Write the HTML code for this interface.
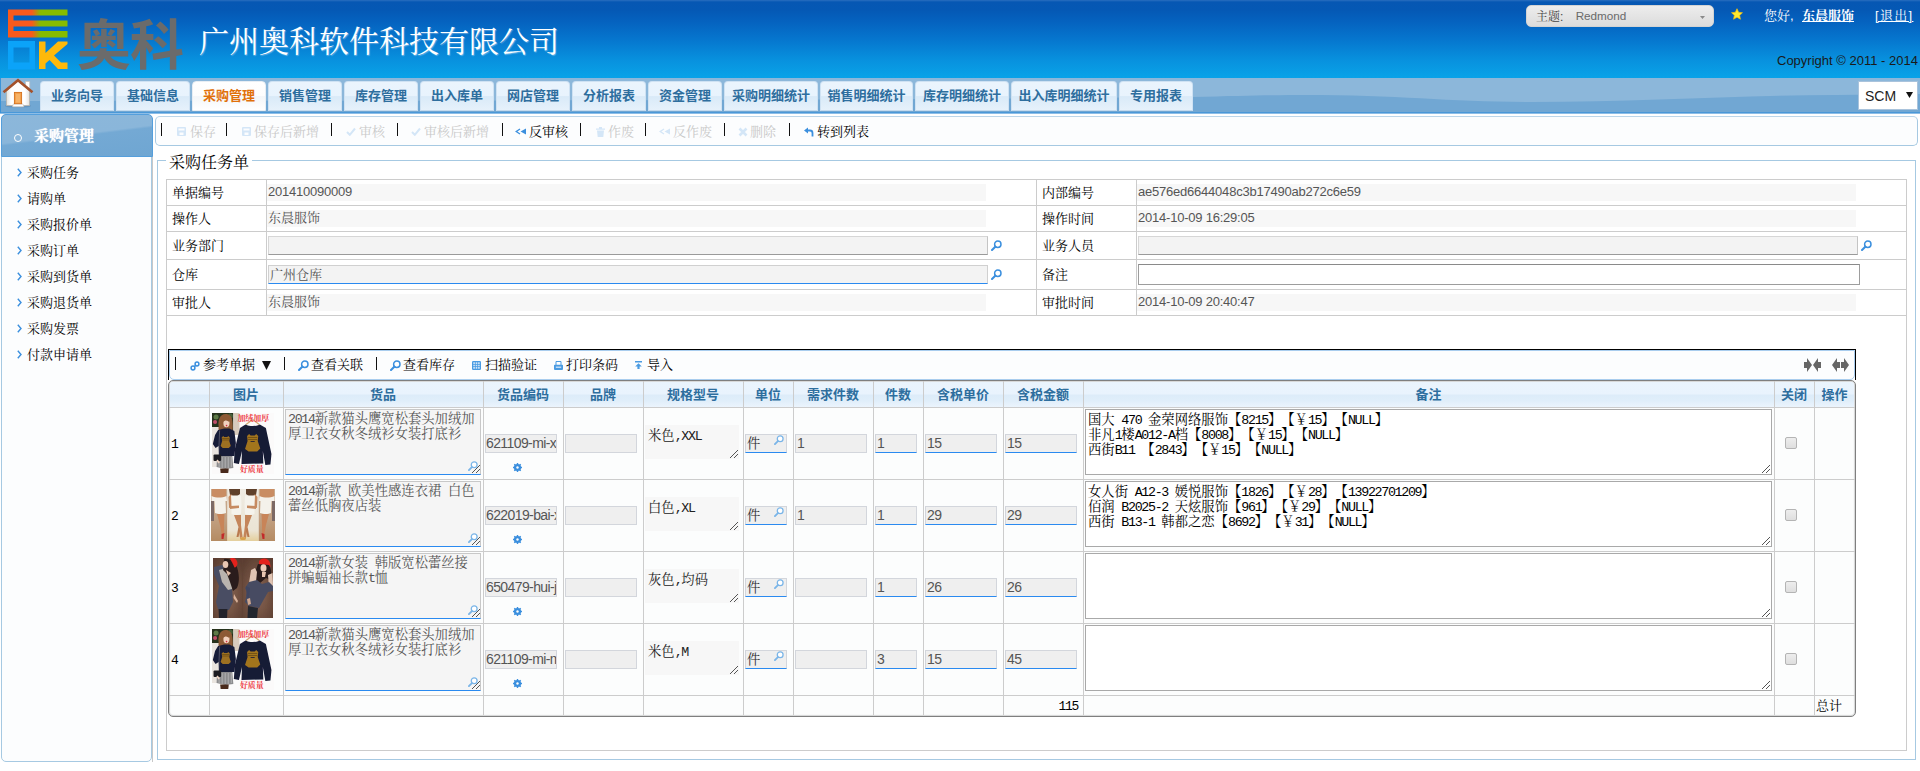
<!DOCTYPE html>
<html lang="zh-CN"><head><meta charset="utf-8"><title>采购任务单</title>
<style>
*{box-sizing:border-box;margin:0;padding:0}
html,body{width:1920px;height:771px;overflow:hidden;background:#fff;text-spacing-trim:space-all;font-kerning:none}
body{position:relative;font:13px/15px "Liberation Sans","Noto Serif CJK SC",serif;color:#000}
.a{position:absolute}
.song{font-family:"Liberation Serif","Noto Serif CJK SC",serif}
.sans{font-family:"Liberation Sans","Noto Sans CJK SC",sans-serif}
#hdr{left:0;top:0;width:1920px;height:79px;background:linear-gradient(#2a6ebf 0,#0657b3 2px,#0558b4 12%,#0562bf 27%,#0676ce 50%,#0891de 76%,#09a1e7 96%,#0aa2e8 100%)}
#nav{left:0;top:78px;width:1920px;height:35px;background:#8cb7da;overflow:hidden}
.tab{top:81px;height:30px;border:1px solid #cfe2f3;border-bottom-color:#c3daee;border-radius:4px 4px 0 0;background:linear-gradient(#eaf4fd 0,#e8f3fd 50%,#d9eaf8 52%,#e6f1fb 100%);color:#2e6e9e;font:bold 13px/27px "Liberation Sans","Noto Sans CJK SC",sans-serif;text-align:center;white-space:nowrap}
.tab.on{background:linear-gradient(#fff 0,#fdfdfd 50%,#f3f6f9 52%,#fff 100%);color:#e17009;border-color:#e8eef4}
.tb{white-space:nowrap;font:13px/15px "Liberation Sans","Noto Serif CJK SC",serif}
.dis{color:#c9c9c9}
.sep{width:1px;height:13px;background:#111}
.side{left:18px;color:#111;white-space:nowrap}
.lbl{color:#000;white-space:nowrap}
.val{color:#555;white-space:nowrap;font:12px/15px "Liberation Sans","Noto Serif CJK SC",sans-serif}
.rob{background:#f7f7f7;height:17px}
.hl{height:1px;background:#ccc}
.vl{width:1px;background:#ccc}
.gh{top:382px;height:26px;color:#2e6e9e;font:bold 13px/26px "Liberation Sans","Noto Sans CJK SC",sans-serif;text-align:center;white-space:nowrap}
.inp{background:#efefef;border:1px solid #d3d6dc;height:19px;color:#555;font:14px/17px "Liberation Sans",sans-serif;letter-spacing:-.6px;padding-left:1px;overflow:hidden;white-space:nowrap}
.inp.b{border-bottom:1px solid #2a8af0}
.ta{background:#f5f5f5;border:1px solid #c8c8c8;border-bottom:1px solid #2a8af0;color:#555;font:13.330px/15px "Liberation Mono","Noto Serif CJK SC",serif;padding:2px 2px;overflow:hidden;word-spacing:-1.330px}
.tw{background:#fff;border:1px solid #a9a9a9;color:#000;font:13.330px/15px "Liberation Mono","Noto Serif CJK SC",serif;padding:3px 2px 1px;overflow:hidden;white-space:pre;word-spacing:-1.330px}
.m{font-family:'Liberation Mono',monospace;letter-spacing:-.1em}
.cb{width:12px;height:12px;border:1px solid #b4b4b4;border-radius:2px;background:linear-gradient(#ededed,#dedede)}
</style></head>
<body>
<div class="a" id="hdr"></div>
<svg class="a" style="left:7px;top:8px" width="62" height="62" viewBox="0 0 62 62">
<defs><linearGradient id="lg" x1="0" x2="1" y1="0" y2="0"><stop offset="0.40" stop-color="#f95a1c"/><stop offset="0.55" stop-color="#86bc00"/></linearGradient></defs>
<path d="M1 1.5H60.5V7.5H6.5V12.5H60.5V18.5H6.5V23H60.5V29.5H1Z" fill="url(#lg)"/>
<path d="M1 33H28V61.5H1Z M6.5 39.5V54.5H22.5V39.5Z" fill="#0ba3f9" fill-rule="evenodd"/>
<path d="M32 33.5H38.5V45L51 33.5H60.5V36L47 47.5L54 54.5H60.5V61H51L42.5 52L38.5 55.5V61H32Z" fill="#fdb90b"/>
</svg>
<div class="a sans" style="left:77px;top:13px;font:bold 54px/66px 'Liberation Sans','Noto Sans CJK SC',sans-serif;color:#6b6b6b;letter-spacing:-1px;white-space:nowrap">奥科</div>
<div class="a song" style="left:199px;top:22px;font:30px/40px 'Liberation Serif','Noto Serif CJK SC',serif;color:#fff;white-space:nowrap;text-shadow:1px 1px 1px rgba(255,255,255,.35)">广州奥科软件科技有限公司</div>
<div class="a " style="left:1526px;top:5px;width:188px;height:22px;border-radius:5px;background:linear-gradient(#ededed,#dcdcdc);border:1px solid #d3d3d3"></div>
<div class="a tb" style="left:1536px;top:9px;color:#444;font-size:12px">主题: <span style="margin-left:9px;font-size:11.700px;color:#6a6a6a;position:relative;top:-1.500px">Redmond</span></div>
<svg class="a" style="left:1700px;top:16px" width="5" height="3"><path d="M0 0H5L2.500 3Z" fill="#8a8a8a"/></svg>
<svg class="a" style="left:1731px;top:8px" width="12" height="12" viewBox="0 0 14 14"><path d="M7 .8L8.9 5l4.5.5-3.3 3.1.9 4.5L7 10.8 3 13.100l.9-4.500L.6 5.500 5.100 5z" fill="#ffe92e" stroke="#f3bd0f" stroke-width=".8"/></svg>
<div class="a tb" style="left:1764px;top:8px;color:#fff">您好,</div>
<div class="a tb" style="left:1802px;top:8px;color:#fff;font-weight:bold;text-decoration:underline">东晨服饰</div>
<div class="a tb" style="left:1875px;top:8px;color:#fff;text-decoration:underline;letter-spacing:1.300px">[退出]</div>
<div class="a " style="left:1777px;top:53px;color:#1a1a1a;font:13px/15px 'Liberation Sans','Noto Sans CJK SC',sans-serif;white-space:nowrap">Copyright © 2011 - 2014</div>
<div class="a" id="nav"><svg class="a" style="left:0;top:0" width="1920" height="35" viewBox="0 0 1920 35" preserveAspectRatio="none"><path d="M0 23 C400 23 900 22 1192 19 C1250 17.500 1280 17 1304 17 C1400 17 1450 24 1532 24 C1640 24 1740 17 1836 17 L1920 16 V35 H0Z" fill="#71a7d3"/></svg></div>
<div class="a " style="left:0;top:112px;width:1920px;height:1px;background:#4a98d8"></div>
<div class="a " style="left:0;top:113px;width:1920px;height:1px;background:#8dbde6"></div>
<div class="a " style="left:0;top:78px;width:1px;height:35px;background:#3a93d8"></div>
<div class="a tab" style="left:40px;width:74px">业务向导</div>
<div class="a tab" style="left:116px;width:74px">基础信息</div>
<div class="a tab on" style="left:192px;width:74px">采购管理</div>
<div class="a tab" style="left:268px;width:74px">销售管理</div>
<div class="a tab" style="left:344px;width:74px">库存管理</div>
<div class="a tab" style="left:420px;width:74px">出入库单</div>
<div class="a tab" style="left:496px;width:74px">网店管理</div>
<div class="a tab" style="left:572px;width:74px">分析报表</div>
<div class="a tab" style="left:648px;width:74px">资金管理</div>
<div class="a tab" style="left:724px;width:94px">采购明细统计</div>
<div class="a tab" style="left:820px;width:93px">销售明细统计</div>
<div class="a tab" style="left:915px;width:94px">库存明细统计</div>
<div class="a tab" style="left:1011px;width:106px">出入库明细统计</div>
<div class="a tab" style="left:1119px;width:74px">专用报表</div>
<svg class="a" style="left:2px;top:78px" width="32" height="32" viewBox="0 0 32 32">
<defs><linearGradient id="wg" x1="0" x2="1" y1="0" y2="0"><stop offset="0" stop-color="#e4e2de"/><stop offset=".2" stop-color="#fff"/><stop offset=".8" stop-color="#fff"/><stop offset="1" stop-color="#e4e2de"/></linearGradient></defs>
<ellipse cx="16" cy="28" rx="13" ry="1.600" fill="rgba(60,90,130,.25)"/>
<path d="M23.500 3.500h4.200v9l-4.200-4z" fill="#fff" stroke="#c4c0b8" stroke-width=".7"/>
<path d="M4.500 13V27.500H27.500V13L16 3Z" fill="url(#wg)" stroke="#b9b4ab" stroke-width=".8"/>
<path d="M1.500 14.200L16 2.200L30.500 14.200" fill="none" stroke="#a4522c" stroke-width="2.600" stroke-linejoin="miter"/>
<path d="M11.300 26h9.700l.8 2.800H10.500z" fill="#fff" stroke="#c4c0b8" stroke-width=".6"/>
<rect x="12.400" y="14.400" width="7.200" height="11.300" fill="#f3a04a" stroke="#d46f1a" stroke-width=".9"/>
<rect x="14" y="16" width="4" height="8.500" fill="#f7b266"/>
</svg>
<div class="a " style="left:1858px;top:81px;width:60px;height:29px;background:#fff;border:1px solid #a9c3dc"></div>
<div class="a " style="left:1865px;top:88px;font:14px/16px 'Liberation Sans','Noto Sans CJK SC',sans-serif;color:#222">SCM</div>
<svg class="a" style="left:1906px;top:92px" width="7" height="6"><path d="M0 0H7L3.500 6Z" fill="#111"/></svg>
<div class="a " style="left:1px;top:114px;width:151px;height:648px;border:1px solid #a6c9e2;border-radius:5px;background:#fcfdfe"></div>
<div class="a " style="left:152px;top:118px;width:1px;height:644px;background:#c8c8c8"></div>
<div class="a " style="left:1px;top:114px;width:152px;height:43px;border-radius:5px 5px 0 0;background:linear-gradient(173deg,#8cb7da 0,#8ab6da 48%,#74a9d4 52%,#6fa6d2 100%);border:1px solid #559fdc"></div>
<div class="a " style="left:14px;top:134px;width:8px;height:8px;border:1px solid #fff;border-radius:50%"></div>
<div class="a " style="left:34px;top:126px;color:#fff;font:bold 15px/20px 'Liberation Sans','Noto Serif CJK SC',serif;white-space:nowrap;text-shadow:0 0 1px #fff">采购管理</div>
<svg class="a" style="left:17px;top:168px" width="5" height="9"><path d="M.8 .8L4 4.500L.8 8.200" fill="none" stroke="#3b8fde" stroke-width="1.4"/></svg>
<div class="a tb" style="left:27px;top:165px">采购任务</div>
<svg class="a" style="left:17px;top:194px" width="5" height="9"><path d="M.8 .8L4 4.500L.8 8.200" fill="none" stroke="#3b8fde" stroke-width="1.4"/></svg>
<div class="a tb" style="left:27px;top:191px">请购单</div>
<svg class="a" style="left:17px;top:220px" width="5" height="9"><path d="M.8 .8L4 4.500L.8 8.200" fill="none" stroke="#3b8fde" stroke-width="1.4"/></svg>
<div class="a tb" style="left:27px;top:217px">采购报价单</div>
<svg class="a" style="left:17px;top:246px" width="5" height="9"><path d="M.8 .8L4 4.500L.8 8.200" fill="none" stroke="#3b8fde" stroke-width="1.4"/></svg>
<div class="a tb" style="left:27px;top:243px">采购订单</div>
<svg class="a" style="left:17px;top:272px" width="5" height="9"><path d="M.8 .8L4 4.500L.8 8.200" fill="none" stroke="#3b8fde" stroke-width="1.4"/></svg>
<div class="a tb" style="left:27px;top:269px">采购到货单</div>
<svg class="a" style="left:17px;top:298px" width="5" height="9"><path d="M.8 .8L4 4.500L.8 8.200" fill="none" stroke="#3b8fde" stroke-width="1.4"/></svg>
<div class="a tb" style="left:27px;top:295px">采购退货单</div>
<svg class="a" style="left:17px;top:324px" width="5" height="9"><path d="M.8 .8L4 4.500L.8 8.200" fill="none" stroke="#3b8fde" stroke-width="1.4"/></svg>
<div class="a tb" style="left:27px;top:321px">采购发票</div>
<svg class="a" style="left:17px;top:350px" width="5" height="9"><path d="M.8 .8L4 4.500L.8 8.200" fill="none" stroke="#3b8fde" stroke-width="1.4"/></svg>
<div class="a tb" style="left:27px;top:347px">付款申请单</div>
<div class="a " style="left:155px;top:116px;width:1763px;height:30px;border:1px solid #a6c9e2;border-radius:5px;background:#fcfdfe;border-top-color:#bcd6ea"></div>
<div class="a sep" style="left:161px;top:123px"></div>
<svg class="a" style="left:177px;top:127px" width="9" height="9" viewBox="0 0 9 9"><path d="M1 0h7a1 1 0 0 1 1 1v7a1 1 0 0 1-1 1H1a1 1 0 0 1-1-1V1a1 1 0 0 1 1-1zM1.500 1.500v2h6v-2zM2.500 5.500v2.500h4V5.500z" fill="#d4e6f7" fill-rule="evenodd"/></svg>
<div class="a tb dis" style="left:190px;top:124px">保存</div>
<div class="a sep" style="left:226px;top:123px"></div>
<svg class="a" style="left:242px;top:127px" width="9" height="9" viewBox="0 0 9 9"><path d="M1 0h7a1 1 0 0 1 1 1v7a1 1 0 0 1-1 1H1a1 1 0 0 1-1-1V1a1 1 0 0 1 1-1zM1.500 1.500v2h6v-2zM2.500 5.500v2.500h4V5.500z" fill="#d4e6f7" fill-rule="evenodd"/></svg>
<div class="a tb dis" style="left:254px;top:124px">保存后新增</div>
<div class="a sep" style="left:331px;top:123px"></div>
<svg class="a" style="left:346px;top:127px" width="10" height="9" viewBox="0 0 10 9"><path d="M1 5L3.800 7.800L9 1.500" fill="none" stroke="#d4e6f7" stroke-width="2"/></svg>
<div class="a tb dis" style="left:359px;top:124px">审核</div>
<div class="a sep" style="left:397px;top:123px"></div>
<svg class="a" style="left:411px;top:127px" width="10" height="9" viewBox="0 0 10 9"><path d="M1 5L3.800 7.800L9 1.500" fill="none" stroke="#d4e6f7" stroke-width="2"/></svg>
<div class="a tb dis" style="left:424px;top:124px">审核后新增</div>
<div class="a sep" style="left:502px;top:123px"></div>
<svg class="a" style="left:515px;top:127px" width="11" height="9" viewBox="0 0 11 9"><path d="M5 2L1.200 4.500L5 7" fill="none" stroke="#3b8fde" stroke-width="1.300"/><path d="M11 1.500V7.500L5.500 4.500Z" fill="#3b8fde"/></svg>
<div class="a tb" style="left:529px;top:124px">反审核</div>
<div class="a sep" style="left:580px;top:123px"></div>
<svg class="a" style="left:596px;top:127px" width="9" height="10" viewBox="0 0 9 10"><path d="M0 1.500h9v1.200H0zM3 0h3v1.500H3zM1 3.500h7l-.7 6.500H1.700z" fill="#d4e6f7"/></svg>
<div class="a tb dis" style="left:608px;top:124px">作废</div>
<div class="a sep" style="left:645px;top:123px"></div>
<svg class="a" style="left:659px;top:127px" width="11" height="9" viewBox="0 0 11 9"><path d="M5 2L1.200 4.500L5 7" fill="none" stroke="#d4e6f7" stroke-width="1.300"/><path d="M11 1.500V7.500L5.500 4.500Z" fill="#d4e6f7"/></svg>
<div class="a tb dis" style="left:673px;top:124px">反作废</div>
<div class="a sep" style="left:724px;top:123px"></div>
<svg class="a" style="left:738px;top:127px" width="10" height="10" viewBox="0 0 10 10"><path d="M1.500 1.500L8.500 8.500M8.500 1.500L1.500 8.500" fill="none" stroke="#d4e6f7" stroke-width="2.600"/></svg>
<div class="a tb dis" style="left:750px;top:124px">删除</div>
<div class="a sep" style="left:789px;top:123px"></div>
<svg class="a" style="left:804px;top:127px" width="10" height="10" viewBox="0 0 10 10"><path d="M4 0.500V6.500L0 3.500Z" fill="#3b8fde"/><path d="M3.500 3.500H6A2.500 2.500 0 0 1 8.500 6V9.500" fill="none" stroke="#3b8fde" stroke-width="1.800"/></svg>
<div class="a tb" style="left:817px;top:124px">转到列表</div>
<div class="a " style="left:157px;top:160px;width:1759px;height:600px;border:1px solid #a6c9e2"></div>
<div class="a " style="left:166px;top:152px;width:86px;height:18px;background:#fff"></div>
<div class="a " style="left:169px;top:153px;font:16px/20px 'Liberation Serif','Noto Serif CJK SC',serif;color:#000;white-space:nowrap">采购任务单</div>
<div class="a " style="left:166px;top:179px;width:1741px;height:572px;border:1px solid #ccc"></div>
<div class="a hl" style="left:167px;top:205px;width:1739px"></div>
<div class="a hl" style="left:167px;top:231px;width:1739px"></div>
<div class="a hl" style="left:167px;top:259px;width:1739px"></div>
<div class="a hl" style="left:167px;top:289px;width:1739px"></div>
<div class="a hl" style="left:167px;top:315px;width:1739px"></div>
<div class="a vl" style="left:266px;top:180px;height:135px"></div>
<div class="a vl" style="left:1036px;top:180px;height:135px"></div>
<div class="a vl" style="left:1136px;top:180px;height:135px"></div>
<div class="a tb lbl" style="left:172px;top:185px">单据编号</div>
<div class="a tb lbl" style="left:1042px;top:185px">内部编号</div>
<div class="a tb lbl" style="left:172px;top:211px">操作人</div>
<div class="a tb lbl" style="left:1042px;top:211px">操作时间</div>
<div class="a tb lbl" style="left:172px;top:238px">业务部门</div>
<div class="a tb lbl" style="left:1042px;top:238px">业务人员</div>
<div class="a tb lbl" style="left:172px;top:267px">仓库</div>
<div class="a tb lbl" style="left:1042px;top:267px">备注</div>
<div class="a tb lbl" style="left:172px;top:295px">审批人</div>
<div class="a tb lbl" style="left:1042px;top:295px">审批时间</div>
<div class="a rob" style="left:267px;top:184px;width:719px"></div>
<div class="a rob" style="left:1137px;top:184px;width:719px"></div>
<div class="a rob" style="left:267px;top:210px;width:719px"></div>
<div class="a rob" style="left:1137px;top:210px;width:719px"></div>
<div class="a rob" style="left:267px;top:294px;width:719px"></div>
<div class="a rob" style="left:1137px;top:294px;width:719px"></div>
<div class="a val" style="left:268px;top:184px;font-size:13px;letter-spacing:-.22px">201410090009</div>
<div class="a val" style="left:1138px;top:184px;font-size:13px;letter-spacing:-.22px">ae576ed6644048c3b17490ab272c6e59</div>
<div class="a val" style="left:268px;top:210px;font-size:13px">东晨服饰</div>
<div class="a val" style="left:1138px;top:210px;font-size:13px;letter-spacing:-.22px">2014-10-09 16:29:05</div>
<div class="a val" style="left:268px;top:294px;font-size:13px">东晨服饰</div>
<div class="a val" style="left:1138px;top:294px;font-size:13px;letter-spacing:-.22px">2014-10-09 20:40:47</div>
<div class="a " style="left:268px;top:236px;width:720px;height:19px;background:#f3f3f3;border:1px solid #d6d6d6;border-bottom-color:#9a9a9a;border-right-color:#c4c4c4"></div>
<div class="a " style="left:1138px;top:236px;width:720px;height:19px;background:#f3f3f3;border:1px solid #d6d6d6;border-bottom-color:#9a9a9a;border-right-color:#c4c4c4"></div>
<div class="a " style="left:268px;top:265px;width:720px;height:19px;background:#f3f3f3;border:1px solid #d0d0d0;border-bottom:1px solid #2a8af0"></div>
<div class="a val" style="left:270px;top:267px;font-size:13px">广州仓库</div>
<div class="a " style="left:1138px;top:264px;width:722px;height:21px;background:#fff;border:1px solid #9d9d9d;border-top-color:#8a8a8a"></div>
<svg class="a" style="left:991px;top:240px" width="11" height="11" viewBox="0 0 11 11"><circle cx="6.800" cy="4.200" r="3.200" fill="#fff" stroke="#3b8fde" stroke-width="1.500"/><path d="M4.300 6.700L1 10" stroke="#3b8fde" stroke-width="2" stroke-linecap="round"/></svg>
<svg class="a" style="left:991px;top:269px" width="11" height="11" viewBox="0 0 11 11"><circle cx="6.800" cy="4.200" r="3.200" fill="#fff" stroke="#3b8fde" stroke-width="1.500"/><path d="M4.300 6.700L1 10" stroke="#3b8fde" stroke-width="2" stroke-linecap="round"/></svg>
<svg class="a" style="left:1861px;top:240px" width="11" height="11" viewBox="0 0 11 11"><circle cx="6.800" cy="4.200" r="3.200" fill="#fff" stroke="#3b8fde" stroke-width="1.500"/><path d="M4.300 6.700L1 10" stroke="#3b8fde" stroke-width="2" stroke-linecap="round"/></svg>
<div class="a " style="left:168px;top:349px;width:1688px;height:31px;border:1px solid #000;border-bottom:0"></div>
<div class="a " style="left:169px;top:350px;width:1686px;height:30px;border:1px solid #a9cdee;border-radius:0 0 5px 5px;background:#fcfdfe"></div>
<div class="a sep" style="left:175px;top:357px"></div>
<svg class="a" style="left:190px;top:361px" width="10" height="10" viewBox="0 0 10 10"><circle cx="7" cy="3" r="1.900" fill="none" stroke="#3b8fde" stroke-width="1.500"/><circle cx="3" cy="7" r="1.900" fill="none" stroke="#3b8fde" stroke-width="1.500"/><path d="M4.300 5.700L5.700 4.300" stroke="#3b8fde" stroke-width="1.500"/></svg>
<div class="a tb" style="left:203px;top:357px">参考单据</div>
<svg class="a" style="left:262px;top:361px" width="9" height="9"><path d="M0 0H9L4.500 9Z" fill="#111"/></svg>
<div class="a sep" style="left:284px;top:357px"></div>
<svg class="a" style="left:298px;top:360px" width="11" height="11" viewBox="0 0 11 11"><circle cx="6.800" cy="4.200" r="3.200" fill="#fff" stroke="#3b8fde" stroke-width="1.500"/><path d="M4.300 6.700L1 10" stroke="#3b8fde" stroke-width="2" stroke-linecap="round"/></svg>
<div class="a tb" style="left:311px;top:357px">查看关联</div>
<div class="a sep" style="left:376px;top:357px"></div>
<svg class="a" style="left:390px;top:360px" width="11" height="11" viewBox="0 0 11 11"><circle cx="6.800" cy="4.200" r="3.200" fill="#fff" stroke="#3b8fde" stroke-width="1.500"/><path d="M4.300 6.700L1 10" stroke="#3b8fde" stroke-width="2" stroke-linecap="round"/></svg>
<div class="a tb" style="left:403px;top:357px">查看库存</div>
<svg class="a" style="left:472px;top:361px" width="9" height="9" viewBox="0 0 9 9"><rect width="9" height="9" rx="1.200" fill="#4a9be2"/><path d="M1.300 1.300h1.600v1.600H1.300zM3.700 1.300h1.600v1.600H3.700zM6.100 1.300h1.600v1.600H6.100zM1.300 3.700h1.600v1.600H1.300zM3.700 3.700h1.600v1.600H3.700zM6.100 3.700h1.600v1.600H6.100zM1.300 6.100h1.600v1.600H1.300zM3.700 6.100h1.600v1.600H3.700zM6.100 6.100h1.600v1.600H6.100z" fill="#cfe5f8"/></svg>
<div class="a tb" style="left:485px;top:357px">扫描验证</div>
<svg class="a" style="left:554px;top:361px" width="9" height="9" viewBox="0 0 9 9"><path d="M2 .5h5v4H2z" fill="#fff" stroke="#4a9be2" stroke-width="1"/><path d="M.8 3.800h7.400a.8 .8 0 0 1 .8 .8v3.400a1 1 0 0 1-1 1H1a1 1 0 0 1-1-1V4.600a.8 .8 0 0 1 .8-.8z" fill="#4a9be2"/><rect x="1.800" y="5.600" width="5.400" height="1.200" fill="#dcecfa"/></svg>
<div class="a tb" style="left:566px;top:357px">打印条码</div>
<svg class="a" style="left:635px;top:361px" width="7" height="8" viewBox="0 0 7 8"><path d="M0 0h7v1.400H0zM3.500 2.200L6.800 5.400H4.600V8H2.400V5.400H.2z" fill="#4a9be2"/></svg>
<div class="a tb" style="left:647px;top:357px">导入</div>
<svg class="a" style="left:1804px;top:358px" width="17" height="14" viewBox="0 0 17 14"><path d="M0 4h3V0l5 7-5 7v-4H0z" fill="#666"/><path d="M17 4h-3V0L9 7l5 7v-4h3z" fill="#666"/></svg>
<svg class="a" style="left:1832px;top:358px" width="17" height="14" viewBox="0 0 17 14"><path d="M8 4H5V0L0 7l5 7v-4h3z" fill="#666"/><path d="M9 4h3V0l5 7-5 7v-4H9z" fill="#666"/></svg>
<div class="a " style="left:168px;top:380px;width:1688px;height:337px;border:1px solid #7f7f7f;border-radius:5px;background:#fcfdfd;box-shadow:inset 0 0 1px 1px rgba(0,0,0,.16)"></div>
<div class="a " style="left:170px;top:382px;width:1684px;height:25px;border-radius:3px 3px 0 0;background:linear-gradient(#eaf4fd 0,#e9f3fd 48%,#ddecf9 52%,#e0eefa 75%,#ebf4fd 100%)"></div>
<div class="a gh" style="left:209px;width:74px">图片</div>
<div class="a gh" style="left:283px;width:200px">货品</div>
<div class="a gh" style="left:483px;width:80px">货品编码</div>
<div class="a gh" style="left:563px;width:80px">品牌</div>
<div class="a gh" style="left:643px;width:100px">规格型号</div>
<div class="a gh" style="left:743px;width:50px">单位</div>
<div class="a gh" style="left:793px;width:80px">需求件数</div>
<div class="a gh" style="left:873px;width:50px">件数</div>
<div class="a gh" style="left:923px;width:80px">含税单价</div>
<div class="a gh" style="left:1003px;width:80px">含税金额</div>
<div class="a gh" style="left:1083px;width:691px">备注</div>
<div class="a gh" style="left:1774px;width:40px">关闭</div>
<div class="a gh" style="left:1814px;width:41px">操作</div>
<div class="a vl" style="left:209px;top:381px;height:334px"></div>
<div class="a vl" style="left:283px;top:381px;height:334px"></div>
<div class="a vl" style="left:483px;top:381px;height:334px"></div>
<div class="a vl" style="left:563px;top:381px;height:334px"></div>
<div class="a vl" style="left:643px;top:381px;height:334px"></div>
<div class="a vl" style="left:743px;top:381px;height:334px"></div>
<div class="a vl" style="left:793px;top:381px;height:334px"></div>
<div class="a vl" style="left:873px;top:381px;height:334px"></div>
<div class="a vl" style="left:923px;top:381px;height:334px"></div>
<div class="a vl" style="left:1003px;top:381px;height:334px"></div>
<div class="a vl" style="left:1083px;top:381px;height:334px"></div>
<div class="a vl" style="left:1774px;top:381px;height:334px"></div>
<div class="a vl" style="left:1814px;top:381px;height:334px"></div>
<div class="a hl" style="left:169px;top:407px;width:1686px"></div>
<div class="a hl" style="left:169px;top:479px;width:1686px"></div>
<div class="a hl" style="left:169px;top:551px;width:1686px"></div>
<div class="a hl" style="left:169px;top:623px;width:1686px"></div>
<div class="a hl" style="left:169px;top:695px;width:1686px"></div>
<div class="a tb" style="left:171px;top:436px"><span class="m">1</span></div>
<svg class="a" style="left:212px;top:413px" width="62" height="61" viewBox="0 0 61 61" preserveAspectRatio="none">
<defs><filter id="b1" x="-5%" y="-5%" width="110%" height="110%"><feGaussianBlur stdDeviation=".45"/></filter></defs>
<rect width="61" height="61" fill="#fbfafa"/>
<g filter="url(#b1)">
<rect x="0" y="0" width="21" height="20" fill="#27301f"/>
<rect x="0" y="14" width="9" height="40" fill="#e9e4df"/>
<circle cx="3" cy="9" r="2" fill="#c0506a"/><circle cx="4" cy="4" r="2.500" fill="#5d7a46"/><circle cx="18" cy="3" r="2.500" fill="#46603a"/>
<rect x="21" y="0" width="6" height="22" fill="#d8cbbd"/>
<path d="M13.500 1C7 1 6 8 6.500 13C6 17 7 20 9 21L12 16L17 17L19 20C21 17 20.500 12 20 8C19.500 3 17 1 13.500 1Z" fill="#8d5a34"/>
<ellipse cx="14.200" cy="10" rx="3" ry="4.300" fill="#f1d0bd"/>
<path d="M10.500 6.500C12 4.500 16 4.500 17.500 7L17 9C15 7 12.500 7 11 9Z" fill="#8d5a34"/>
<circle cx="14.300" cy="12.600" r=".8" fill="#d8283c"/>
<path d="M6 17L12 15.500H17L22 18L23.500 30L22 43H7L6.500 33L3.500 35L.8 31L3 22Z" fill="#171b38"/>
<path d="M9.500 24.500L11 23L12 24H15L16 23L17.500 24.500L17 28L18.500 33L16.500 35H10.500L8.500 33L10 28Z" fill="#9c6f20"/>
<path d="M10 25.500h7M10 27h7" stroke="#6a4a16" stroke-width=".7"/>
<path d="M7.500 17.500L6.500 43" stroke="#8a8a92" stroke-width=".5" fill="none"/>
<path d="M5 43H20L21 55L13 56L4.500 54Z" fill="#8c8c8e"/>
<path d="M7 44v10M10 44v11M13 44v11M16 44v11M19 44v10" stroke="#b9b9bb" stroke-width=".8"/>
<rect x="1.500" y="41.500" width="7.500" height="6.500" rx="1" fill="#1d1d20"/>
<path d="M5 47l2 3" stroke="#f0d6c6" stroke-width="1.600"/>
<path d="M8 55.500L16.500 55.500L16 60H8.500Z" fill="#4a2c1e"/>
<path d="M40 6.500L33.500 11.500M40 6.500L46.500 11.500" stroke="#cfa870" stroke-width="1.200" fill="none"/>
<path d="M40 5v2" stroke="#b9b9b9" stroke-width=".8"/>
<path d="M33 11.500C37 13.500 43 13.500 47 11.500L53 15L58.500 41L57.500 51.500L52.500 52L50 38L50.500 50.500L29 51L29.500 38L26.500 51L21.500 50L22.500 36L27.500 15Z" fill="#161a36"/>
<path d="M34.500 23L36.500 21L38 22.500H42L43.500 21L45.500 23L45 28L47.500 35.500L44.500 38.500H36L32.500 36L35 28Z" fill="#a2741f"/>
<path d="M35.500 24.500h9M35.500 26.500h9" stroke="#6a4a16" stroke-width=".8"/>
<path d="M38 28.500h4" stroke="#161a36" stroke-width=".8"/>
</g>
<text x="25" y="8" font-family="'Liberation Serif','Noto Serif CJK SC',serif" font-size="7.800" font-weight="bold" fill="#ee3a44">加绒加厚</text>
<text x="27.500" y="59" font-family="'Liberation Serif','Noto Serif CJK SC',serif" font-size="7.800" font-weight="bold" fill="#ee3a44">好质量</text>
</svg>
<div class="a ta" style="left:285px;top:409px;width:196px;height:66px"><span class="m">2014</span>新款猫头鹰宽松套头加绒加厚卫衣女秋冬绒衫女装打底衫</div>
<svg class="a" style="left:468px;top:461px" width="10" height="10" viewBox="0 0 11 11"><circle cx="6.800" cy="4.200" r="3.200" fill="#fff" stroke="#7ab5e8" stroke-width="1.400"/><path d="M4.300 6.700L1 10" stroke="#7ab5e8" stroke-width="2" stroke-linecap="round"/></svg>
<svg class="a" style="left:472px;top:465px" width="8" height="8" viewBox="0 0 8 8"><path d="M0 8L8 0M4 8L8 4" stroke="#555" stroke-width="1"/></svg>
<div class="a inp" style="left:485px;top:434px;width:72px;padding-left:0">621109-mi-x</div>
<svg class="a" style="left:513px;top:463px" width="9" height="9" viewBox="0 0 9 9"><circle cx="4.500" cy="4.500" r="2.600" fill="none" stroke="#3b8fde" stroke-width="2"/><path d="M4.500 0v9M0 4.500h9M1.300 1.300l6.400 6.400M7.700 1.300L1.300 7.700" stroke="#3b8fde" stroke-width="1.400"/><circle cx="4.500" cy="4.500" r="1.200" fill="#fcfdfd"/></svg>
<div class="a inp" style="left:565px;top:434px;width:72px"></div>
<div class="a " style="left:645px;top:425px;width:94px;height:34px;background:#f7f7f7;color:#222;font:13.330px/15px 'Liberation Mono','Noto Serif CJK SC',serif;padding:4px 3px 0;white-space:nowrap">米色<span class="m">,XXL</span></div>
<svg class="a" style="left:730px;top:450px" width="8" height="8" viewBox="0 0 8 8"><path d="M0 8L8 0M4 8L8 4" stroke="#555" stroke-width="1"/></svg>
<div class="a inp b" style="left:745px;top:434px;width:42px;font:13.330px/17px 'Liberation Sans','Noto Serif CJK SC',serif;color:#333;letter-spacing:0">件</div>
<svg class="a" style="left:774px;top:435px" width="10" height="10" viewBox="0 0 11 11"><circle cx="6.800" cy="4.200" r="3.200" fill="#fff" stroke="#7ab5e8" stroke-width="1.400"/><path d="M4.300 6.700L1 10" stroke="#7ab5e8" stroke-width="2" stroke-linecap="round"/></svg>
<div class="a inp" style="left:795px;top:434px;width:72px">1</div>
<div class="a inp b" style="left:875px;top:434px;width:42px">1</div>
<div class="a inp b" style="left:925px;top:434px;width:72px">15</div>
<div class="a inp b" style="left:1005px;top:434px;width:72px">15</div>
<div class="a tw" style="left:1085px;top:409px;width:687px;height:66px">国大 <span class="m">470</span> 金荣网络服饰【<span class="m">8215</span>】【￥<span class="m">15</span>】【<span class="m">NULL</span>】
非凡<span class="m">1</span>楼<span class="m">A012-A</span>档【<span class="m">8008</span>】【￥<span class="m">15</span>】【<span class="m">NULL</span>】
西街<span class="m">B11</span> 【<span class="m">2843</span>】【￥<span class="m">15</span>】【<span class="m">NULL</span>】</div>
<svg class="a" style="left:1762px;top:465px" width="8" height="8" viewBox="0 0 8 8"><path d="M0 8L8 0M4 8L8 4" stroke="#555" stroke-width="1"/></svg>
<div class="a cb" style="left:1785px;top:437px"></div>
<div class="a tb" style="left:171px;top:508px"><span class="m">2</span></div>
<svg class="a" style="left:211px;top:489px" width="64" height="52" viewBox="0 0 64 52" preserveAspectRatio="none">
<defs><filter id="b2" x="-5%" y="-5%" width="110%" height="110%"><feGaussianBlur stdDeviation=".5"/></filter>
<linearGradient id="fl" x1="0" x2="0" y1="0" y2="1"><stop offset="0" stop-color="#c9ab8e"/><stop offset=".55" stop-color="#c2a183"/><stop offset="1" stop-color="#b58b63"/></linearGradient>
<linearGradient id="cw" x1="0" x2="0" y1="0" y2="1"><stop offset="0" stop-color="#efebe2"/><stop offset=".8" stop-color="#ebe4d4"/><stop offset="1" stop-color="#e4cf9c"/></linearGradient>
<g id="lf"><path d="M1 0H15V8L14 9H2L1 8Z" fill="#c98d63"/>
<path d="M.500 7C5 9 11 9 15.500 7L16 12L14.500 12L15 24C11 25.500 7 25.500 4 24L3.500 12L.500 13Z" fill="#f4f1ea"/>
<path d="M6 25L13.500 25L13 36L13 47H11L9 36Z" fill="#c88459"/>
<path d="M10.500 45L13.500 44L12.500 50L10.500 50Z" fill="#c22a2c"/>
<rect x="0" y="12" width="3" height="20" fill="#7c6a66"/></g>
<g id="cf"><path d="M18 0H29V5L25 8L19 6Z" fill="#5f3f2c"/>
<path d="M17.500 8L20 5L22 8V18L18 19Z" fill="#c68a60"/>
<path d="M20 6.500H30L30.500 16L30 25C26 26.500 23 26 20.500 25L20.500 17Z" fill="#f5f3ec"/>
<path d="M19 17L28 16.500L28 19L19 20Z" fill="#c68a60"/>
<path d="M23 26H30L30 36L31.500 48L29 49L27.500 38Z" fill="#c4855a"/>
<path d="M27.500 38L25.500 48H27.500L29 42Z" fill="#b9794f"/></g>
</defs>
<rect width="64" height="52" fill="#efebe2"/>
<g filter="url(#b2)">
<rect x="0" y="0" width="16.500" height="52" fill="url(#fl)"/>
<rect x="47.500" y="0" width="16.500" height="52" fill="url(#fl)"/>
<rect x="16.500" y="0" width="31" height="52" fill="url(#cw)"/>
<use href="#lf"/><use href="#lf" transform="translate(64 0) scale(-1 1)"/>
<use href="#cf"/><use href="#cf" transform="translate(64 0) scale(-1 1)"/>
<ellipse cx="32" cy="49.500" rx="3" ry="1.500" fill="#d9a24e"/>
</g></svg>
<div class="a ta" style="left:285px;top:481px;width:196px;height:66px"><span class="m">2014</span>新款 欧美性感连衣裙 白色蕾丝低胸夜店装</div>
<svg class="a" style="left:468px;top:533px" width="10" height="10" viewBox="0 0 11 11"><circle cx="6.800" cy="4.200" r="3.200" fill="#fff" stroke="#7ab5e8" stroke-width="1.400"/><path d="M4.300 6.700L1 10" stroke="#7ab5e8" stroke-width="2" stroke-linecap="round"/></svg>
<svg class="a" style="left:472px;top:537px" width="8" height="8" viewBox="0 0 8 8"><path d="M0 8L8 0M4 8L8 4" stroke="#555" stroke-width="1"/></svg>
<div class="a inp" style="left:485px;top:506px;width:72px;padding-left:0">622019-bai-x</div>
<svg class="a" style="left:513px;top:535px" width="9" height="9" viewBox="0 0 9 9"><circle cx="4.500" cy="4.500" r="2.600" fill="none" stroke="#3b8fde" stroke-width="2"/><path d="M4.500 0v9M0 4.500h9M1.300 1.300l6.400 6.400M7.700 1.300L1.300 7.700" stroke="#3b8fde" stroke-width="1.400"/><circle cx="4.500" cy="4.500" r="1.200" fill="#fcfdfd"/></svg>
<div class="a inp" style="left:565px;top:506px;width:72px"></div>
<div class="a " style="left:645px;top:497px;width:94px;height:34px;background:#f7f7f7;color:#222;font:13.330px/15px 'Liberation Mono','Noto Serif CJK SC',serif;padding:4px 3px 0;white-space:nowrap">白色<span class="m">,XL</span></div>
<svg class="a" style="left:730px;top:522px" width="8" height="8" viewBox="0 0 8 8"><path d="M0 8L8 0M4 8L8 4" stroke="#555" stroke-width="1"/></svg>
<div class="a inp b" style="left:745px;top:506px;width:42px;font:13.330px/17px 'Liberation Sans','Noto Serif CJK SC',serif;color:#333;letter-spacing:0">件</div>
<svg class="a" style="left:774px;top:507px" width="10" height="10" viewBox="0 0 11 11"><circle cx="6.800" cy="4.200" r="3.200" fill="#fff" stroke="#7ab5e8" stroke-width="1.400"/><path d="M4.300 6.700L1 10" stroke="#7ab5e8" stroke-width="2" stroke-linecap="round"/></svg>
<div class="a inp" style="left:795px;top:506px;width:72px">1</div>
<div class="a inp b" style="left:875px;top:506px;width:42px">1</div>
<div class="a inp b" style="left:925px;top:506px;width:72px">29</div>
<div class="a inp b" style="left:1005px;top:506px;width:72px">29</div>
<div class="a tw" style="left:1085px;top:481px;width:687px;height:66px">女人街 <span class="m">A12-3</span> 媛悦服饰【<span class="m">1826</span>】【￥<span class="m">28</span>】【<span class="m">13922701209</span>】
佰润 <span class="m">B2025-2</span> 天炫服饰【<span class="m">961</span>】【￥<span class="m">29</span>】【<span class="m">NULL</span>】
西街 <span class="m">B13-1</span> 韩都之恋【<span class="m">8692</span>】【￥<span class="m">31</span>】【<span class="m">NULL</span>】</div>
<svg class="a" style="left:1762px;top:537px" width="8" height="8" viewBox="0 0 8 8"><path d="M0 8L8 0M4 8L8 4" stroke="#555" stroke-width="1"/></svg>
<div class="a cb" style="left:1785px;top:509px"></div>
<div class="a tb" style="left:171px;top:580px"><span class="m">3</span></div>
<svg class="a" style="left:213px;top:558px" width="60" height="60" viewBox="0 0 60 60" preserveAspectRatio="none">
<defs><filter id="b3" x="-5%" y="-5%" width="110%" height="110%"><feGaussianBlur stdDeviation=".5"/></filter>
<radialGradient id="bg3" cx=".5" cy=".6" r=".7"><stop offset="0" stop-color="#8a6653"/><stop offset="1" stop-color="#5b3e31"/></radialGradient></defs>
<rect width="60" height="60" fill="#5f4234"/>
<g filter="url(#b3)">
<rect x="0" y="0" width="29" height="60" fill="url(#bg3)"/>
<rect x="29.500" y="0" width="30.500" height="60" fill="url(#bg3)"/>
<path d="M1 9L9 7L18 10L22 16L19 30L20 44L16 52L5 51L3 44L6 28L1 16Z" fill="#484d63"/>
<path d="M6 12L13 10L20 17L19 31L15 32L9 24Z" fill="#b9b3ae"/>
<path d="M11 1C16 0 22 3 24 9C26 15 27 24 24 30L20 33L17 24L14 16L10 12L11 7Z" fill="#2b1d1a"/>
<ellipse cx="12.500" cy="6.500" rx="2.800" ry="3.600" fill="#e8c6b3"/>
<path d="M13 12L18 15L15 18Z" fill="#e3bfa9"/>
<path d="M17 .500C21 -1 24 1 24.500 5C24.500 7.500 23 9.500 21.500 9.500C20 6 18.500 3.500 17 .500Z" fill="#e4211d"/>
<path d="M21 36L25 43L24 45L20.500 40Z" fill="#d9b39c"/>
<path d="M5.500 51H14.500L14 60H6Z" fill="#20232c"/>
<path d="M46 3C49 -1 56 0 57 5L57.500 9L46 8Z" fill="#e4211d"/>
<path d="M45 6C43 10 42 18 41 23L47 25L53 20L58 22C59 16 58 10 56 7Z" fill="#2b1d1a"/>
<ellipse cx="50.500" cy="10" rx="3" ry="3.800" fill="#ecccb9"/>
<path d="M49 14L53 14L52 19L49 19Z" fill="#e6c4b0"/>
<path d="M38 12L42 10L44 14L43 24L36 25Z" fill="#e0c4b3"/>
<path d="M55 17L59.500 15L60 28L56 30Z" fill="#e0c4b3"/>
<path d="M36 24L44 22L49 26L56 24L60 28L60 33L55 34L46 50L36 48L32 44L34 34L32 30Z" fill="#474c62"/>
<path d="M33 28L37 30L36 40L34 42Z" fill="#3f4560"/>
<path d="M34 41L37 40L38 46L35 47Z" fill="#cfa78f"/>
<path d="M35 48L45 50L44 60H34.500Z" fill="#23262f"/>
</g></svg>
<div class="a ta" style="left:285px;top:553px;width:196px;height:66px"><span class="m">2014</span>新款女装 韩版宽松蕾丝接拼蝙蝠袖长款<span class="m">t</span>恤</div>
<svg class="a" style="left:468px;top:605px" width="10" height="10" viewBox="0 0 11 11"><circle cx="6.800" cy="4.200" r="3.200" fill="#fff" stroke="#7ab5e8" stroke-width="1.400"/><path d="M4.300 6.700L1 10" stroke="#7ab5e8" stroke-width="2" stroke-linecap="round"/></svg>
<svg class="a" style="left:472px;top:609px" width="8" height="8" viewBox="0 0 8 8"><path d="M0 8L8 0M4 8L8 4" stroke="#555" stroke-width="1"/></svg>
<div class="a inp" style="left:485px;top:578px;width:72px;padding-left:0">650479-hui-j</div>
<svg class="a" style="left:513px;top:607px" width="9" height="9" viewBox="0 0 9 9"><circle cx="4.500" cy="4.500" r="2.600" fill="none" stroke="#3b8fde" stroke-width="2"/><path d="M4.500 0v9M0 4.500h9M1.300 1.300l6.400 6.400M7.700 1.300L1.300 7.700" stroke="#3b8fde" stroke-width="1.400"/><circle cx="4.500" cy="4.500" r="1.200" fill="#fcfdfd"/></svg>
<div class="a inp" style="left:565px;top:578px;width:72px"></div>
<div class="a " style="left:645px;top:569px;width:94px;height:34px;background:#f7f7f7;color:#222;font:13.330px/15px 'Liberation Mono','Noto Serif CJK SC',serif;padding:4px 3px 0;white-space:nowrap">灰色<span class="m">,</span>均码</div>
<svg class="a" style="left:730px;top:594px" width="8" height="8" viewBox="0 0 8 8"><path d="M0 8L8 0M4 8L8 4" stroke="#555" stroke-width="1"/></svg>
<div class="a inp b" style="left:745px;top:578px;width:42px;font:13.330px/17px 'Liberation Sans','Noto Serif CJK SC',serif;color:#333;letter-spacing:0">件</div>
<svg class="a" style="left:774px;top:579px" width="10" height="10" viewBox="0 0 11 11"><circle cx="6.800" cy="4.200" r="3.200" fill="#fff" stroke="#7ab5e8" stroke-width="1.400"/><path d="M4.300 6.700L1 10" stroke="#7ab5e8" stroke-width="2" stroke-linecap="round"/></svg>
<div class="a inp" style="left:795px;top:578px;width:72px"></div>
<div class="a inp b" style="left:875px;top:578px;width:42px">1</div>
<div class="a inp b" style="left:925px;top:578px;width:72px">26</div>
<div class="a inp b" style="left:1005px;top:578px;width:72px">26</div>
<div class="a tw" style="left:1085px;top:553px;width:687px;height:66px"></div>
<svg class="a" style="left:1762px;top:609px" width="8" height="8" viewBox="0 0 8 8"><path d="M0 8L8 0M4 8L8 4" stroke="#555" stroke-width="1"/></svg>
<div class="a cb" style="left:1785px;top:581px"></div>
<div class="a tb" style="left:171px;top:652px"><span class="m">4</span></div>
<svg class="a" style="left:212px;top:629px" width="62" height="61" viewBox="0 0 61 61" preserveAspectRatio="none">
<defs><filter id="b4" x="-5%" y="-5%" width="110%" height="110%"><feGaussianBlur stdDeviation=".45"/></filter></defs>
<rect width="61" height="61" fill="#fbfafa"/>
<g filter="url(#b4)">
<rect x="0" y="0" width="21" height="20" fill="#27301f"/>
<rect x="0" y="14" width="9" height="40" fill="#e9e4df"/>
<circle cx="3" cy="9" r="2" fill="#c0506a"/><circle cx="4" cy="4" r="2.500" fill="#5d7a46"/><circle cx="18" cy="3" r="2.500" fill="#46603a"/>
<rect x="21" y="0" width="6" height="22" fill="#d8cbbd"/>
<path d="M13.500 1C7 1 6 8 6.500 13C6 17 7 20 9 21L12 16L17 17L19 20C21 17 20.500 12 20 8C19.500 3 17 1 13.500 1Z" fill="#8d5a34"/>
<ellipse cx="14.200" cy="10" rx="3" ry="4.300" fill="#f1d0bd"/>
<path d="M10.500 6.500C12 4.500 16 4.500 17.500 7L17 9C15 7 12.500 7 11 9Z" fill="#8d5a34"/>
<circle cx="14.300" cy="12.600" r=".8" fill="#d8283c"/>
<path d="M6 17L12 15.500H17L22 18L23.500 30L22 43H7L6.500 33L3.500 35L.8 31L3 22Z" fill="#171b38"/>
<path d="M9.500 24.500L11 23L12 24H15L16 23L17.500 24.500L17 28L18.500 33L16.500 35H10.500L8.500 33L10 28Z" fill="#9c6f20"/>
<path d="M10 25.500h7M10 27h7" stroke="#6a4a16" stroke-width=".7"/>
<path d="M7.500 17.500L6.500 43" stroke="#8a8a92" stroke-width=".5" fill="none"/>
<path d="M5 43H20L21 55L13 56L4.500 54Z" fill="#8c8c8e"/>
<path d="M7 44v10M10 44v11M13 44v11M16 44v11M19 44v10" stroke="#b9b9bb" stroke-width=".8"/>
<rect x="1.500" y="41.500" width="7.500" height="6.500" rx="1" fill="#1d1d20"/>
<path d="M5 47l2 3" stroke="#f0d6c6" stroke-width="1.600"/>
<path d="M8 55.500L16.500 55.500L16 60H8.500Z" fill="#4a2c1e"/>
<path d="M40 6.500L33.500 11.500M40 6.500L46.500 11.500" stroke="#cfa870" stroke-width="1.200" fill="none"/>
<path d="M40 5v2" stroke="#b9b9b9" stroke-width=".8"/>
<path d="M33 11.500C37 13.500 43 13.500 47 11.500L53 15L58.500 41L57.500 51.500L52.500 52L50 38L50.500 50.500L29 51L29.500 38L26.500 51L21.500 50L22.500 36L27.500 15Z" fill="#161a36"/>
<path d="M34.500 23L36.500 21L38 22.500H42L43.500 21L45.500 23L45 28L47.500 35.500L44.500 38.500H36L32.500 36L35 28Z" fill="#a2741f"/>
<path d="M35.500 24.500h9M35.500 26.500h9" stroke="#6a4a16" stroke-width=".8"/>
<path d="M38 28.500h4" stroke="#161a36" stroke-width=".8"/>
</g>
<text x="25" y="8" font-family="'Liberation Serif','Noto Serif CJK SC',serif" font-size="7.800" font-weight="bold" fill="#ee3a44">加绒加厚</text>
<text x="27.500" y="59" font-family="'Liberation Serif','Noto Serif CJK SC',serif" font-size="7.800" font-weight="bold" fill="#ee3a44">好质量</text>
</svg>
<div class="a ta" style="left:285px;top:625px;width:196px;height:66px"><span class="m">2014</span>新款猫头鹰宽松套头加绒加厚卫衣女秋冬绒衫女装打底衫</div>
<svg class="a" style="left:468px;top:677px" width="10" height="10" viewBox="0 0 11 11"><circle cx="6.800" cy="4.200" r="3.200" fill="#fff" stroke="#7ab5e8" stroke-width="1.400"/><path d="M4.300 6.700L1 10" stroke="#7ab5e8" stroke-width="2" stroke-linecap="round"/></svg>
<svg class="a" style="left:472px;top:681px" width="8" height="8" viewBox="0 0 8 8"><path d="M0 8L8 0M4 8L8 4" stroke="#555" stroke-width="1"/></svg>
<div class="a inp" style="left:485px;top:650px;width:72px;padding-left:0">621109-mi-m</div>
<svg class="a" style="left:513px;top:679px" width="9" height="9" viewBox="0 0 9 9"><circle cx="4.500" cy="4.500" r="2.600" fill="none" stroke="#3b8fde" stroke-width="2"/><path d="M4.500 0v9M0 4.500h9M1.300 1.300l6.400 6.400M7.700 1.300L1.300 7.700" stroke="#3b8fde" stroke-width="1.400"/><circle cx="4.500" cy="4.500" r="1.200" fill="#fcfdfd"/></svg>
<div class="a inp" style="left:565px;top:650px;width:72px"></div>
<div class="a " style="left:645px;top:641px;width:94px;height:34px;background:#f7f7f7;color:#222;font:13.330px/15px 'Liberation Mono','Noto Serif CJK SC',serif;padding:4px 3px 0;white-space:nowrap">米色<span class="m">,M</span></div>
<svg class="a" style="left:730px;top:666px" width="8" height="8" viewBox="0 0 8 8"><path d="M0 8L8 0M4 8L8 4" stroke="#555" stroke-width="1"/></svg>
<div class="a inp b" style="left:745px;top:650px;width:42px;font:13.330px/17px 'Liberation Sans','Noto Serif CJK SC',serif;color:#333;letter-spacing:0">件</div>
<svg class="a" style="left:774px;top:651px" width="10" height="10" viewBox="0 0 11 11"><circle cx="6.800" cy="4.200" r="3.200" fill="#fff" stroke="#7ab5e8" stroke-width="1.400"/><path d="M4.300 6.700L1 10" stroke="#7ab5e8" stroke-width="2" stroke-linecap="round"/></svg>
<div class="a inp" style="left:795px;top:650px;width:72px"></div>
<div class="a inp b" style="left:875px;top:650px;width:42px">3</div>
<div class="a inp b" style="left:925px;top:650px;width:72px">15</div>
<div class="a inp b" style="left:1005px;top:650px;width:72px">45</div>
<div class="a tw" style="left:1085px;top:625px;width:687px;height:66px"></div>
<svg class="a" style="left:1762px;top:681px" width="8" height="8" viewBox="0 0 8 8"><path d="M0 8L8 0M4 8L8 4" stroke="#555" stroke-width="1"/></svg>
<div class="a cb" style="left:1785px;top:653px"></div>
<div class="a tb" style="left:1048px;top:698px;width:30px;text-align:right"><span class="m">115</span></div>
<div class="a tb" style="left:1816px;top:698px">总计</div>
</body></html>
